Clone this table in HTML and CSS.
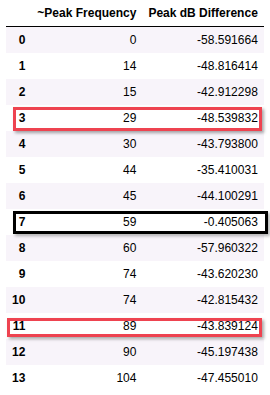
FILE: index.html
```html
<!DOCTYPE html>
<html>
<head>
<meta charset="utf-8">
<link rel="stylesheet" href="styles.css">
</head>
<body>
<div class="frame">
<table class="dataframe">
  <thead>
    <tr><th></th><th>~Peak Frequency</th><th>Peak dB Difference</th></tr>
  </thead>
  <tbody>
    <tr><th>0</th><td>0</td><td>-58.591664</td></tr>
    <tr><th>1</th><td>14</td><td>-48.816414</td></tr>
    <tr><th>2</th><td>15</td><td>-42.912298</td></tr>
    <tr><th>3</th><td>29</td><td>-48.539832</td></tr>
    <tr><th>4</th><td>30</td><td>-43.793800</td></tr>
    <tr><th>5</th><td>44</td><td>-35.410031</td></tr>
    <tr><th>6</th><td>45</td><td>-44.100291</td></tr>
    <tr><th>7</th><td>59</td><td>-0.405063</td></tr>
    <tr><th>8</th><td>60</td><td>-57.960322</td></tr>
    <tr><th>9</th><td>74</td><td>-43.620230</td></tr>
    <tr><th>10</th><td>74</td><td>-42.815432</td></tr>
    <tr><th>11</th><td>89</td><td>-43.839124</td></tr>
    <tr><th>12</th><td>90</td><td>-45.197438</td></tr>
    <tr><th>13</th><td>104</td><td>-47.455010</td></tr>
  </tbody>
</table>
<div class="mark mark-red mark-row3"></div>
<div class="mark mark-black mark-row7"></div>
<div class="mark mark-red mark-row11"></div>
</div>
</body>
</html>
```
FILE: styles.css
```css
html, body {
  margin: 0;
  padding: 0;
  background: #ffffff;
}
.frame {
  position: relative;
  padding-left: 6px;
  font-family: "Liberation Sans", Arial, sans-serif;
  font-size: 12px;
  color: #000;
}
.dataframe {
  border-collapse: collapse;
  border-spacing: 0;
  border: none;
}
.dataframe th,
.dataframe td {
  padding: 6px;
  line-height: normal;
  text-align: right;
  vertical-align: middle;
  white-space: nowrap;
  border: none;
}
.dataframe thead th {
  font-weight: bold;
  border-bottom: 1px solid #000;
  vertical-align: bottom;
}
.dataframe tbody th {
  font-weight: bold;
}
.dataframe td {
  font-weight: normal;
}
.dataframe tbody tr:nth-child(odd) {
  background: #f8f4fa;
}
.mark {
  position: absolute;
  box-sizing: border-box;
  border: 3px solid;
}
.mark-red {
  border-color: #ee4350;
  box-shadow: 2px 2px 3px rgba(0, 0, 0, 0.35);
}
.mark-black {
  border-color: #000;
  box-shadow: 2px 2px 3px rgba(0, 0, 0, 0.3);
}
.mark-row3 {
  left: 13px;
  top: 107px;
  width: 249px;
  height: 24px;
}
.mark-row7 {
  left: 13px;
  top: 211px;
  width: 255px;
  height: 23px;
}
.mark-row11 {
  left: 7px;
  top: 318px;
  width: 255px;
  height: 19px;
}
```
